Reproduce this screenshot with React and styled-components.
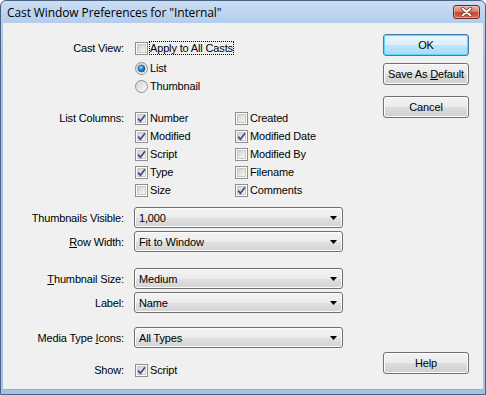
import React from "react";
import styled, { createGlobalStyle } from "styled-components";

const GlobalStyle = createGlobalStyle`
  html, body { margin: 0; padding: 0; background: #fff; }
  body { font-family: "Liberation Sans", Arial, sans-serif; font-size: 11px; color: #000; letter-spacing: -0.15px; }
`;

const Window = styled.div`
  width: 486px;
  height: 395px;
  box-sizing: border-box;
  display: flex;
  flex-direction: column;
  border: 1px solid #4b6382;
  border-radius: 6px 6px 0 0;
  background: linear-gradient(#cadef3, #b3cdec 22px, #a6c3e7 60px, #a4c2e8);
  overflow: hidden;
`;

const TitleBar = styled.div`
  height: 22px;
  flex: none;
  display: flex;
  align-items: center;
  justify-content: space-between;
  padding: 0 5px 0 6px;
`;

const Title = styled.span`
  font-family: "Open Sans", "Noto Sans", sans-serif;
  font-size: 12px;
  color: #000;
  letter-spacing: -0.1px;
`;

const CloseBtn = styled.div`
  width: 27px;
  height: 14px;
  box-sizing: border-box;
  border: 1px solid #6b2a22;
  border-radius: 3px;
  background: linear-gradient(#eab0a2, #d9826e 45%, #c4472f 52%, #d46c52);
  box-shadow: inset 0 0 0 1px rgba(255, 210, 200, 0.5);
  display: flex;
  align-items: center;
  justify-content: center;
`;

const Client = styled.div`
  flex: 1;
  display: flex;
  margin: 0 2px 4px 2px;
  background: #f0f0f0;
  border-bottom: 1px solid #7fb6dc;
`;

const Form = styled.div`
  flex: 1;
  display: flex;
  flex-direction: column;
  padding-top: 16px;
`;

const Row = styled.div`
  display: grid;
  grid-template-columns: 121px 1fr;
  column-gap: 10px;
  align-items: ${(p) => (p.$top ? "start" : "center")};
  margin-top: ${(p) => p.$mt || 0}px;
`;

const Label = styled.span`
  text-align: right;
  white-space: nowrap;
  line-height: ${(p) => (p.$top ? "18px" : "normal")};
  u { text-decoration: underline; }
`;

const Stack = styled.div`
  display: flex;
  flex-direction: column;
`;

const Columns = styled.div`
  display: grid;
  grid-template-columns: 100px 1fr;
  grid-auto-rows: 18px;
`;

const Item = styled.div`
  height: 18px;
  display: flex;
  align-items: center;
  gap: 1px;
  padding-left: 1px;
  svg { flex: none; }
`;

const ItemText = styled.span`
  border: 1px dotted ${(p) => (p.$focus ? "#000" : "transparent")};
  line-height: 12px;
  white-space: nowrap;
`;

const Select = styled.div`
  width: 209px;
  height: 21px;
  box-sizing: border-box;
  border: 1px solid #707070;
  border-radius: 3px;
  background: linear-gradient(#f3f3f3, #ececec 50%, #e0e0e0 51%, #d4d4d4);
  box-shadow: inset 0 0 0 1px #fbfbfb;
  display: flex;
  align-items: center;
  justify-content: space-between;
  padding: 0 5px 0 4px;
`;

const ButtonCol = styled.div`
  width: 86px;
  display: flex;
  flex-direction: column;
  margin-right: 14px;
  padding: 11px 0 15px;
`;

const Button = styled.div`
  height: 22px;
  box-sizing: border-box;
  border: 1px solid ${(p) => (p.$default ? "#3c7fb1" : "#707070")};
  border-radius: 3px;
  background: ${(p) =>
    p.$default
      ? "linear-gradient(#eaf6fd, #d9f0fc 50%, #bee6fd 51%, #a7d9f5)"
      : "linear-gradient(#f2f2f2, #ebebeb 50%, #dddddd 51%, #cfcfcf)"};
  box-shadow: inset 0 0 0 1px ${(p) => (p.$default ? "#5fd4fd" : "#fcfcfc")};
  display: flex;
  align-items: center;
  justify-content: center;
  margin-top: ${(p) => (p.$bottom ? "auto" : `${p.$mt || 0}px`)};
`;

const CheckBox = ({ checked }) => (
  <svg width="13" height="13" viewBox="0 0 13 13">
    <defs>
      <linearGradient id="cbIn" x1="0" y1="0" x2="1" y2="1">
        <stop offset="0" stopColor="#cfcfcf" />
        <stop offset="1" stopColor="#fafafa" />
      </linearGradient>
    </defs>
    <rect x="0.5" y="0.5" width="12" height="12" fill="#fdfdfd" stroke="#8e8f8f" />
    <rect x="2.5" y="2.5" width="8" height="8" fill="url(#cbIn)" stroke="#c8c8c8" />
    {checked && (
      <path d="M3.2 6.6 L5.4 9.3 L10 3.2" stroke="#3d4f8f" strokeWidth="1.7" fill="none" />
    )}
  </svg>
);

const Radio = ({ checked }) => (
  <svg width="13" height="13" viewBox="0 0 13 13">
    <defs>
      <linearGradient id="rbIn" x1="0" y1="0" x2="1" y2="1">
        <stop offset="0" stopColor="#d4d4d4" />
        <stop offset="1" stopColor="#fbfbfb" />
      </linearGradient>
      <radialGradient id="rbDot" cx="0.4" cy="0.35" r="0.7">
        <stop offset="0" stopColor="#a8e2fb" />
        <stop offset="0.45" stopColor="#2a8ad2" />
        <stop offset="1" stopColor="#0c4f8e" />
      </radialGradient>
    </defs>
    <circle cx="6.5" cy="6.5" r="6" fill="url(#rbIn)" stroke="#8e8f8f" />
    {checked && <circle cx="6.5" cy="6.5" r="3.6" fill="url(#rbDot)" stroke="#1b5a93" strokeWidth="0.6" />}
  </svg>
);

const Arrow = () => (
  <svg width="7" height="4" viewBox="0 0 7 4">
    <path d="M0 0 H7 L3.5 4 Z" fill="#000" />
  </svg>
);

const CloseX = () => (
  <svg width="13" height="10" viewBox="0 0 13 10">
    <path d="M2.5 1.5 L10.5 8.5 M10.5 1.5 L2.5 8.5" stroke="#5a2a24" strokeWidth="3.4" strokeLinecap="round" />
    <path d="M2.5 1.5 L10.5 8.5 M10.5 1.5 L2.5 8.5" stroke="#fff" strokeWidth="2" strokeLinecap="round" />
  </svg>
);

const Check = ({ checked, children, focus }) => (
  <Item>
    <CheckBox checked={checked} />
    <ItemText $focus={focus}>{children}</ItemText>
  </Item>
);

const Option = ({ checked, children }) => (
  <Item>
    <Radio checked={checked} />
    <ItemText>{children}</ItemText>
  </Item>
);

const Dropdown = ({ value }) => (
  <Select>
    <span>{value}</span>
    <Arrow />
  </Select>
);

const columns = [
  ["Number", true],
  ["Created", false],
  ["Modified", true],
  ["Modified Date", true],
  ["Script", true],
  ["Modified By", false],
  ["Type", true],
  ["Filename", false],
  ["Size", false],
  ["Comments", true],
];

export default function App() {
  return (
    <>
      <GlobalStyle />
      <Window>
        <TitleBar>
          <Title>Cast Window Preferences for "Internal"</Title>
          <CloseBtn>
            <CloseX />
          </CloseBtn>
        </TitleBar>
        <Client>
          <Form>
            <Row>
              <Label>Cast View:</Label>
              <Check focus>Apply to All Casts</Check>
            </Row>
            <Row $mt={2}>
              <span />
              <Stack>
                <Option checked>List</Option>
                <Option>Thumbnail</Option>
              </Stack>
            </Row>
            <Row $mt={14} $top>
              <Label $top>List Columns:</Label>
              <Columns>
                {columns.map(([name, on]) => (
                  <Check key={name} checked={on}>
                    {name}
                  </Check>
                ))}
              </Columns>
            </Row>
            <Row $mt={8}>
              <Label>Thumbnails Visible:</Label>
              <Dropdown value="1,000" />
            </Row>
            <Row $mt={3}>
              <Label>
                <u>R</u>ow Width:
              </Label>
              <Dropdown value="Fit to Window" />
            </Row>
            <Row $mt={16}>
              <Label>
                <u>T</u>humbnail Size:
              </Label>
              <Dropdown value="Medium" />
            </Row>
            <Row $mt={3}>
              <Label>Label:</Label>
              <Dropdown value="Name" />
            </Row>
            <Row $mt={14}>
              <Label>
                Media Type <u>I</u>cons:
              </Label>
              <Dropdown value="All Types" />
            </Row>
            <Row $mt={13}>
              <Label>Show:</Label>
              <Check checked>Script</Check>
            </Row>
          </Form>
          <ButtonCol>
            <Button $default>OK</Button>
            <Button $mt={7}>
              <span>
                Save As <u>D</u>efault
              </span>
            </Button>
            <Button $mt={11}>Cancel</Button>
            <Button $bottom>Help</Button>
          </ButtonCol>
        </Client>
      </Window>
    </>
  );
}
